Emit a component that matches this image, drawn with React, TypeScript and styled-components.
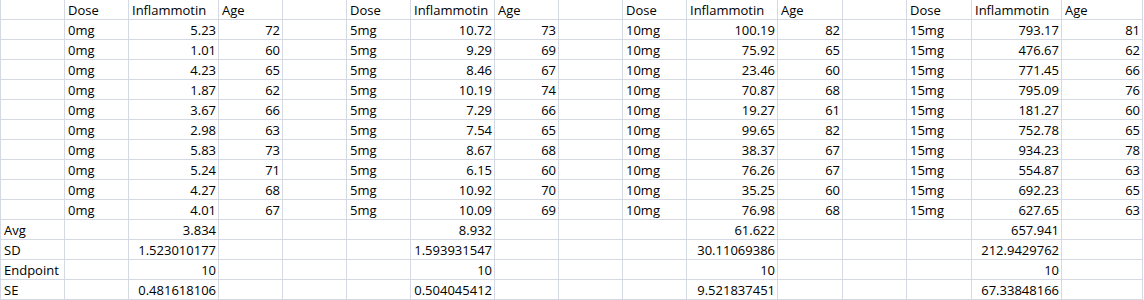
import styled, { createGlobalStyle } from 'styled-components';

const columnWidths = [
  64, 64, 90, 64, 64, 64, 84, 64, 64, 64, 91, 65, 64, 65, 90, 81,
];

const groups = [
  {
    dose: '0mg',
    values: ['5.23', '1.01', '4.23', '1.87', '3.67', '2.98', '5.83', '5.24', '4.27', '4.01'],
    ages: [72, 60, 65, 62, 66, 63, 73, 71, 68, 67],
    stats: ['3.834', '1.523010177', '10', '0.481618106'],
  },
  {
    dose: '5mg',
    values: ['10.72', '9.29', '8.46', '10.19', '7.29', '7.54', '8.67', '6.15', '10.92', '10.09'],
    ages: [73, 69, 67, 74, 66, 65, 68, 60, 70, 69],
    stats: ['8.932', '1.593931547', '10', '0.504045412'],
  },
  {
    dose: '10mg',
    values: ['100.19', '75.92', '23.46', '70.87', '19.27', '99.65', '38.37', '76.26', '35.25', '76.98'],
    ages: [82, 65, 60, 68, 61, 82, 67, 67, 60, 68],
    stats: ['61.622', '30.11069386', '10', '9.521837451'],
  },
  {
    dose: '15mg',
    values: ['793.17', '476.67', '771.45', '795.09', '181.27', '752.78', '934.23', '554.87', '692.23', '627.65'],
    ages: [81, 62, 66, 76, 60, 65, 78, 63, 65, 63],
    stats: ['657.941', '212.9429762', '10', '67.33848166'],
  },
];

const statLabels = ['Avg', 'SD', 'Endpoint', 'SE'];

type CellData = { text: string; right?: boolean };

// build the 15 x 16 grid of cells, row by row
function buildRows(): CellData[][] {
  const rows: CellData[][] = [];
  const header: CellData[] = [];
  groups.forEach(() => {
    header.push({ text: '' }, { text: 'Dose' }, { text: 'Inflammotin' }, { text: 'Age' });
  });
  rows.push(header);

  for (let i = 0; i < 10; i++) {
    const row: CellData[] = [];
    groups.forEach((g) => {
      row.push(
        { text: '' },
        { text: g.dose },
        { text: g.values[i], right: true },
        { text: String(g.ages[i]), right: true },
      );
    });
    rows.push(row);
  }

  statLabels.forEach((label, s) => {
    const row: CellData[] = [];
    groups.forEach((g, gi) => {
      row.push(
        { text: gi === 0 ? label : '' },
        { text: '' },
        { text: g.stats[s], right: true },
        { text: '' },
      );
    });
    rows.push(row);
  });
  return rows;
}

export default function App() {
  const rows = buildRows();
  return (
    <>
      <GlobalStyle />
      <Sheet>
        {rows.map((row, r) =>
          row.map((cell, c) => (
            <Cell key={`${r}-${c}`} $right={cell.right}>
              {cell.text}
            </Cell>
          )),
        )}
      </Sheet>
    </>
  );
}

const GlobalStyle = createGlobalStyle`
  html, body {
    margin: 0;
    padding: 0;
    background: #ffffff;
  }
  body {
    font-family: 'Open Sans', 'Liberation Sans', sans-serif;
    font-size: 13px;
    color: #000000;
  }
`;

const Sheet = styled.div`
  display: grid;
  grid-template-columns: ${columnWidths.map((w) => `${w}px`).join(' ')};
  grid-auto-rows: 20px;
  width: max-content;
  border-left: 1px solid #d4d9e3;
  background: #ffffff;
`;

const Cell = styled.div<{ $right?: boolean }>`
  box-sizing: border-box;
  height: 20px;
  padding: 2px 2px 0 3px;
  line-height: 17px;
  border-right: 1px solid #d4d9e3;
  border-bottom: 1px solid #d4d9e3;
  text-align: ${(props) => (props.$right ? 'right' : 'left')};
  white-space: nowrap;
  overflow: visible;
`;
